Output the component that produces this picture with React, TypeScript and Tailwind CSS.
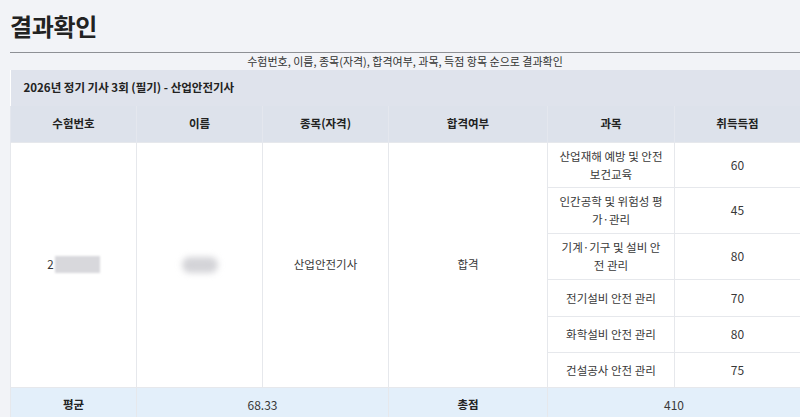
const subjects = [
  { name: "산업재해 예방 및 안전\n보건교육", score: 60, h: "h-[45px]" },
  { name: "인간공학 및 위험성 평\n가·관리", score: 45, h: "h-[46px]" },
  { name: "기계·기구 및 설비 안\n전 관리", score: 80, h: "h-[46px]" },
  { name: "전기설비 안전 관리", score: 70, h: "h-[37px]" },
  { name: "화학설비 안전 관리", score: 80, h: "h-[36px]" },
  { name: "건설공사 안전 관리", score: 75, h: "h-[35px]" },
];

const cell = "border border-[#e6e8ec] text-center align-middle";

export default function App() {
  return (
    <div
      className="min-h-screen w-[800px] bg-[#f2f3f7] text-[#383838] overflow-hidden"
      style={{ fontFamily: '"Noto Sans CJK KR", "Noto Sans", sans-serif' }}
    >
      <div className="pl-[10px] pt-[8px]">
        <h1 className="text-[24px] font-bold leading-[36px] text-[#222] tracking-[-0.3px]">결과확인</h1>
        <div className="mt-[8px] border-t border-[#8e9095]" />
        <p className="text-center text-[11px] leading-[17px] text-[#333]">
          수험번호, 이름, 종목(자격), 합격여부, 과목, 득점 항목 순으로 결과확인
        </p>

        <table className="w-[790px] table-fixed border-collapse bg-white text-[11.5px]">
          <colgroup>
            <col className="w-[126px]" />
            <col className="w-[126px]" />
            <col className="w-[126px]" />
            <col className="w-[159px]" />
            <col className="w-[127px]" />
            <col className="w-[126px]" />
          </colgroup>
          <thead>
            <tr className="h-[36px] bg-[#dfe3ec]">
              <th colSpan={6} className="pl-[13px] text-left font-bold text-[11.5px] text-[#222]">
                2026년 정기 기사 3회 (필기) - 산업안전기사
              </th>
            </tr>
            <tr className="h-[36px] bg-[#dde2eb]">
              {["수험번호", "이름", "종목(자격)", "합격여부", "과목", "취득득점"].map((t) => (
                <th key={t} className="border-x border-[#e4e7ee] text-center font-bold text-[#222]">
                  {t}
                </th>
              ))}
            </tr>
          </thead>
          <tbody>
            {subjects.map((s, i) => (
              <tr key={s.name} className={s.h}>
                {i === 0 && (
                  <>
                    <td rowSpan={6} className={cell}>
                      <div className="flex items-center justify-center">
                        <span>2</span>
                        <span className="ml-[1px] h-[17px] w-[45px] bg-[#d8d8dc] blur-[1px]" />
                      </div>
                    </td>
                    <td rowSpan={6} className={cell}>
                      <div className="flex justify-center">
                        <span className="h-[16px] w-[36px] rounded-full bg-[#d4d4d8] blur-[3px]" />
                      </div>
                    </td>
                    <td rowSpan={6} className={cell}>산업안전기사</td>
                    <td rowSpan={6} className={cell}>합격</td>
                  </>
                )}
                <td className={`${cell} whitespace-pre-line leading-[18px]`}>{s.name}</td>
                <td className={`${cell} text-[12px]`}>{s.score}</td>
              </tr>
            ))}
            <tr className="h-[36px] bg-[#e3effa]">
              <td className={`${cell} font-bold text-[#222]`}>평균</td>
              <td colSpan={2} className={`${cell} text-[12px]`}>68.33</td>
              <td className={`${cell} font-bold text-[#222]`}>총점</td>
              <td colSpan={2} className={`${cell} text-[12px]`}>410</td>
            </tr>
          </tbody>
        </table>
      </div>
    </div>
  );
}
